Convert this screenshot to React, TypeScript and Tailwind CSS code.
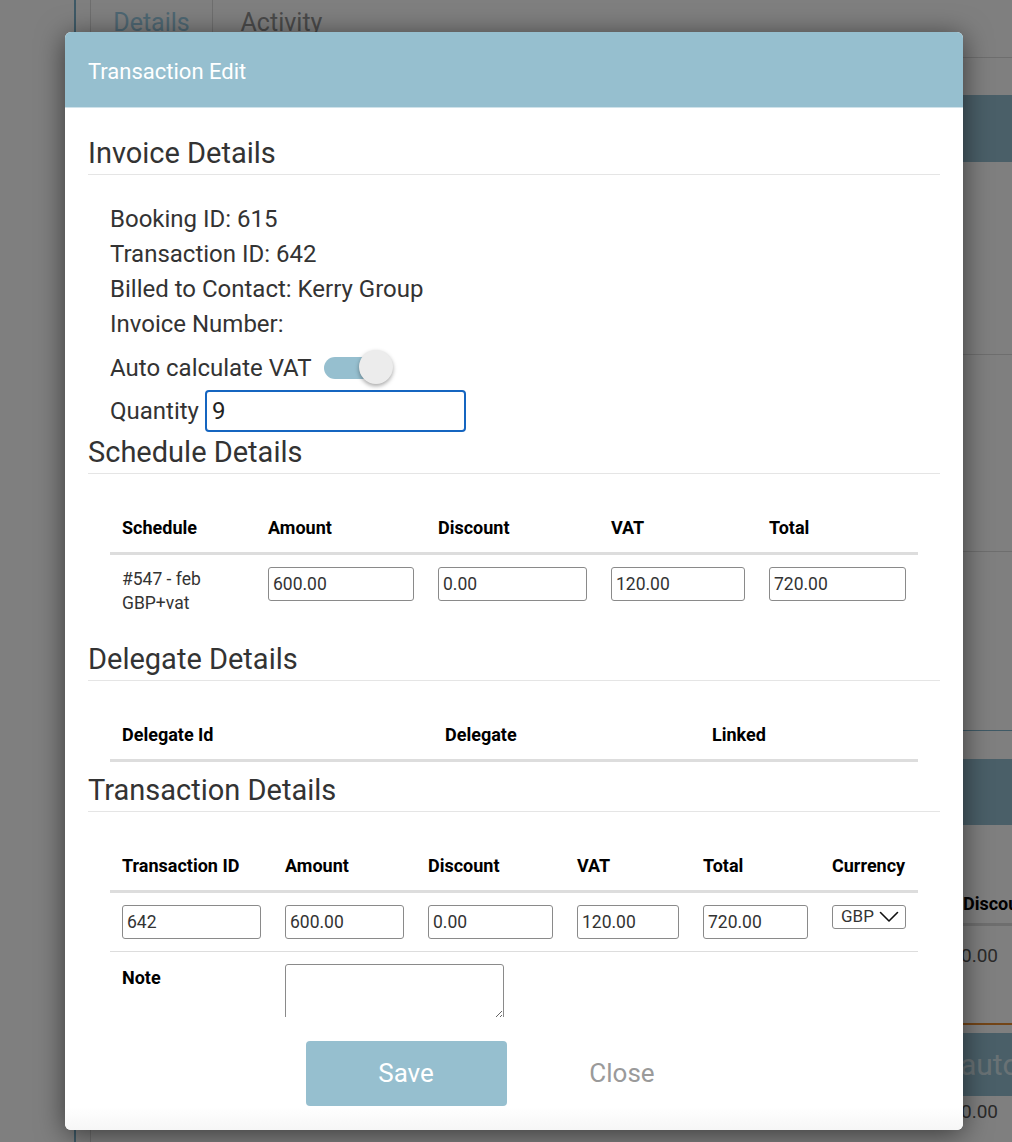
import React from "react";

const scheduleCols = [
	{ label: "Schedule", w: "w-[146px]" },
	{ label: "Amount", w: "w-[170px]" },
	{ label: "Discount", w: "w-[173px]" },
	{ label: "VAT", w: "w-[158px]" },
	{ label: "Total", w: "w-[161px]" },
];

const delegateCols = [
	{ label: "Delegate Id", w: "w-[323px]" },
	{ label: "Delegate", w: "w-[267px]" },
	{ label: "Linked", w: "w-[218px]" },
];

const txCols = [
	{ label: "Transaction ID", w: "w-[163px]" },
	{ label: "Amount", w: "w-[143px]" },
	{ label: "Discount", w: "w-[149px]" },
	{ label: "VAT", w: "w-[126px]" },
	{ label: "Total", w: "w-[129px]" },
	{ label: "Currency", w: "w-[98px]" },
];

const Field = ({ value }: { value: string }) => (
	<input
		readOnly
		value={value}
		className="w-full h-[34px] px-[4px] border border-[#8a8a8a] rounded-[3px] text-[17.5px] text-[#333] bg-white outline-none"
	/>
);

const SectionTitle = ({ title, className }: { title: string; className?: string }) => (
	<h2
		className={
			"text-[29px] leading-[34px] text-[#333] font-normal pb-[4px] border-b border-[#e5e5e5] " +
			(className ?? "")
		}
	>
		{title}
	</h2>
);

const HeadRow = ({ cols }: { cols: { label: string; w: string }[] }) => (
	<thead>
		<tr className="border-b-[3px] border-[#dddddd]">
			{cols.map((c) => (
				<th
					key={c.label}
					className={c.w + " text-left font-bold text-[18px] leading-[24px] text-black px-[12px] pt-[15px] pb-[12px]"}
				>
					{c.label}
				</th>
			))}
		</tr>
	</thead>
);

// the page that sits behind the dimmed overlay
const BackPage = () => (
	<div className="flex w-full h-full bg-white">
		<div className="w-[76px] shrink-0 border-r-2 border-[#7db2cc]" />
		<div className="ml-[14px] flex-1 border-l border-[#dddddd] flex flex-col">
			<div className="h-[58px] shrink-0 flex border-b border-[#dddddd]">
				<div className="w-[122px] pt-[8px] leading-[30px] text-center text-[25px] text-[#9ccfe6] border-r border-[#dddddd]">
					Details
				</div>
				<div className="w-[137px] pt-[8px] leading-[30px] text-center text-[25px] text-[#949494]">
					Activity
				</div>
			</div>
			<div className="mt-[37px] h-[67px] shrink-0 bg-[#94bed0]" />
			<div className="h-[193px] shrink-0 border-b border-[#dddddd]" />
			<div className="h-[197px] shrink-0 border-b border-[#dddddd]" />
			<div className="h-[179px] shrink-0 border-b border-[#7eb4cc]" />
			<div className="mt-[28px] h-[66px] shrink-0 bg-[#94bed0]" />
			<div className="h-[101px] shrink-0 flex items-end pl-[872px] pb-[6px] border-b-[3px] border-[#dcdcdc] font-bold text-[18px] text-black">
				Discount
			</div>
			<div className="h-[99px] shrink-0 pl-[870px] pt-[16px] text-[19px] text-[#555] border-b-2 border-[#e68a2e]">
				0.00
			</div>
			<div className="mt-[8px] h-[63px] shrink-0 bg-[#94bed0] flex items-center pl-[869px] text-[30px] text-white/60">
				auto
			</div>
			<div className="pl-[870px] pt-[2px] text-[19px] text-[#555]">0.00</div>
		</div>
	</div>
);

export default function App() {
	return (
		<div className="relative w-[1012px] h-[1142px] overflow-hidden font-['Roboto',sans-serif]">
			<BackPage />
			<div className="absolute inset-0 bg-black/50" />

			<div className="absolute left-[65px] top-[32px] w-[898px] h-[1098px] flex flex-col bg-white rounded-[6px] overflow-hidden shadow-[0_4px_28px_rgba(0,0,0,0.55)]">
				<div className="h-[76px] shrink-0 flex items-center px-[23px] pt-[3px] bg-[#96bfcf] border-b border-[#cfe2ea] text-white text-[22px]">
					Transaction Edit
				</div>

				<div className="h-[909px] shrink-0 overflow-hidden px-[23px] pt-[28px] text-[#333]">
					<SectionTitle title="Invoice Details" />

					<div className="pl-[22px] mt-[27px] text-[24px] leading-[35px]">
						<div>Booking ID: 615</div>
						<div>Transaction ID: 642</div>
						<div>Billed to Contact: Kerry Group</div>
						<div>Invoice Number:</div>
						<div className="mt-[4px] h-[44px] flex items-center gap-[12px]">
							<span>Auto calculate VAT</span>
							<div className="relative w-[70px] h-[36px] flex items-center">
								<div className="w-[62px] h-[22px] rounded-full bg-[#96bfcf]" />
								<div className="absolute right-[1px] top-[0px] w-[34px] h-[34px] rounded-full bg-[#ececec] shadow-[0_2px_4px_rgba(0,0,0,0.35)]" />
							</div>
						</div>
						<div className="h-[42px] flex items-center gap-[6px]">
							<span>Quantity</span>
							<input
								readOnly
								value="9"
								className="w-[261px] h-[42px] px-[5px] border-2 border-[#1565c0] rounded-[4px] text-[24px] text-[#222] outline-none"
							/>
						</div>
					</div>

					<SectionTitle title="Schedule Details" className="mt-[3px]" />
					<table className="mx-[22px] mt-[27px] w-[808px] table-fixed border-collapse">
						<HeadRow cols={scheduleCols} />
						<tbody>
							<tr>
								<td className="px-[12px] py-[12px] align-top text-[17.5px] leading-[24px] text-[#333]">
									#547 - feb
									<br />
									GBP+vat
								</td>
								<td className="px-[12px] py-[12px] align-top">
									<Field value="600.00" />
								</td>
								<td className="px-[12px] py-[12px] align-top">
									<Field value="0.00" />
								</td>
								<td className="px-[12px] py-[12px] align-top">
									<Field value="120.00" />
								</td>
								<td className="px-[12px] py-[12px] align-top">
									<Field value="720.00" />
								</td>
							</tr>
						</tbody>
					</table>

					<SectionTitle title="Delegate Details" className="mt-[15px]" />
					<table className="mx-[22px] mt-[27px] w-[808px] table-fixed border-collapse">
						<HeadRow cols={delegateCols} />
					</table>

					<SectionTitle title="Transaction Details" className="mt-[11px]" />
					<table className="mx-[22px] mt-[27px] w-[808px] table-fixed border-collapse">
						<HeadRow cols={txCols} />
						<tbody>
							<tr className="border-b border-[#dddddd]">
								<td className="px-[12px] py-[12px]">
									<Field value="642" />
								</td>
								<td className="px-[12px] py-[12px]">
									<Field value="600.00" />
								</td>
								<td className="px-[12px] py-[12px]">
									<Field value="0.00" />
								</td>
								<td className="px-[12px] py-[12px]">
									<Field value="120.00" />
								</td>
								<td className="px-[12px] py-[12px]">
									<Field value="720.00" />
								</td>
								<td className="px-[12px] py-[12px] align-top">
									<div className="inline-flex items-center gap-[5px] h-[24px] pl-[8px] pr-[6px] border border-[#8a8a8a] rounded-[3px] text-[17px] text-[#333]">
										GBP
										<svg width="20" height="12" viewBox="0 0 20 12" fill="none">
											<polyline points="1.5,1.5 10,10 18.5,1.5" stroke="#111" strokeWidth="1.6" strokeLinecap="round" strokeLinejoin="round" />
										</svg>
									</div>
								</td>
							</tr>
							<tr>
								<td className="px-[12px] pt-[14px] pb-[12px] align-top font-bold text-[18px] leading-[24px] text-black">
									Note
								</td>
								<td colSpan={3} className="px-[12px] py-[12px] align-top">
									<textarea className="block w-[219px] h-[56px] border border-[#8a8a8a] rounded-[3px] outline-none" />
								</td>
							</tr>
						</tbody>
					</table>
				</div>

				<div className="flex-1 flex justify-center gap-[15px] pt-[24px] bg-gradient-to-b from-white from-80% to-[#f6f6f6]">
					<button className="w-[201px] h-[65px] rounded-[4px] bg-[#96bfcf] text-white text-[26px]">
						Save
					</button>
					<button className="w-[201px] h-[65px] text-[#9a9a9a] text-[26px]">Close</button>
				</div>
			</div>
		</div>
	);
}
